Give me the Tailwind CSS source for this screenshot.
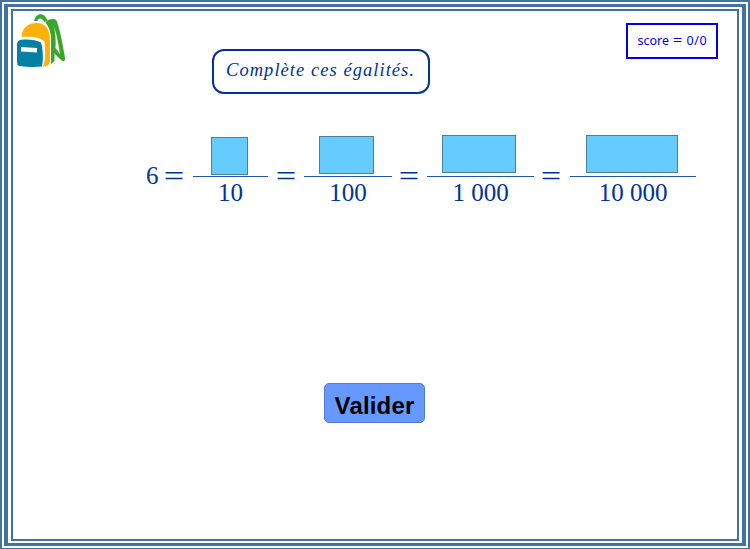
<!DOCTYPE html>
<html lang="fr">
<head>
<meta charset="utf-8">
<title>Égalités</title>
<script src="https://cdn.jsdelivr.net/npm/@tailwindcss/browser@4"></script>
</head>
<body class="bg-white">
<div class="w-[750px] h-[549px] overflow-hidden border-[#4272a0] border-x-2 border-t-2 border-b p-0.5">
<div class="w-full h-full border-[#4272a0] border-x-4 border-y-3 px-[3px] py-0.5">
<main class="relative w-full h-full border-2 border-[#4272a0] text-[#003399] font-['Liberation_Serif',serif]">
  <header class="flex items-start h-[110px]">
    <svg class="ml-[3px] mt-[2px] w-[50px] h-[56px] shrink-0" viewBox="16 13 50 56">
      <path d="M34 21C36 12 45 12 47.500 21L44 22C43 18 38 17 37.500 21Z" fill="#3aa62a"/>
      <path d="M45.500 22.500C48 19 54 18 56.500 20.500C60 29 63 46 65.200 59C65 61 63 62 61 60L54.500 53.500L54.500 61L51 64V40C51 32 49 27 45.500 22.500Z" fill="#3aa62a"/>
      <path d="M53.500 26C57 34 58.500 45 60 54L55.500 48C56 40 55.500 32 53.500 26Z" fill="white"/>
      <path d="M21.500 37C22 27 29 22.500 38 23C48 24 50 32 50 42V62C49 66 46 67 43 66.500C45.500 62 45.500 50 44.500 42C42 37 30 36 21.500 37Z" fill="#ffb10b"/>
      <path d="M20 40C28 39 36 40 41 42.500C43 49 43.500 60 42 66.500Q31 67.500 19 66Q17 65 17 62V44Q17.500 40.500 20 40Z" fill="#0380a3"/>
      <path d="M21 47L37 48V52.500L21 51.500Z" fill="white"/>
    </svg>
    <h1 class="ml-[146px] mt-[37.500px] w-[218px] h-[45px] shrink-0 border-2 border-[#003399] rounded-[12px] flex items-center">
      <span class="ml-[12px] whitespace-nowrap text-[18.500px] italic tracking-[1.05px]">Complète ces égalités.</span>
    </h1>
    <div class="ml-[196px] mt-[12px] w-[92px] h-[36px] shrink-0 border-2 border-[#0000ee] text-[#0000ee] flex items-center justify-center text-[12.500px] font-['Noto_Sans',sans-serif] whitespace-nowrap"><span>score <span class="inline-block mx-[2px] scale-x-135">=</span> 0<span class="mx-[0.5px]">/</span>0</span></div>
  </header>
  <section class="ml-[133px] flex text-[25px] leading-[28px]">
    <div class="w-[12px] mt-[41px]">6</div>
    <div class="w-[16px] ml-[8px] mt-[41px] text-center"><span class="inline-block scale-x-145 scale-y-120">=</span></div>
    <div class="w-[75px] ml-[11px] flex flex-col items-center pt-[16px]"><div class="w-[37px] h-[38px] border border-[#4c8095] bg-[#66ccff] -translate-x-px"></div><div class="w-full h-px bg-[#2454aa] mt-px"></div><div class="mt-[2px]">10</div></div>
    <div class="w-[16px] ml-[10px] mt-[41px] text-center"><span class="inline-block scale-x-145 scale-y-120">=</span></div>
    <div class="w-[88px] ml-[10px] flex flex-col items-center pt-[15px]"><div class="w-[55px] h-[38px] border border-[#4c8095] bg-[#66ccff] -translate-x-[2px]"></div><div class="w-full h-px bg-[#2454aa] mt-[2px]"></div><div class="mt-[2px]">100</div></div>
    <div class="w-[16px] ml-[9px] mt-[41px] text-center"><span class="inline-block scale-x-145 scale-y-120">=</span></div>
    <div class="w-[107px] ml-[10px] flex flex-col items-center pt-[14px]"><div class="w-[74px] h-[38px] border border-[#4c8095] bg-[#66ccff] -translate-x-[2px]"></div><div class="w-full h-px bg-[#2454aa] mt-[3px]"></div><div class="mt-[2px]">1 000</div></div>
    <div class="w-[16px] ml-[9px] mt-[41px] text-center"><span class="inline-block scale-x-145 scale-y-120">=</span></div>
    <div class="w-[126px] ml-[11px] flex flex-col items-center pt-[14px]"><div class="w-[92px] h-[38px] border border-[#4c8095] bg-[#66ccff] -translate-x-px"></div><div class="w-full h-px bg-[#2454aa] mt-[3px]"></div><div class="mt-[2px]">10 000</div></div>
  </section>
  <button class="block ml-[311px] mt-[176px] w-[101px] h-[40px] rounded-[5px] border border-[#507bd0] bg-[#6699ff] text-black font-bold text-[24px] leading-none pt-[6px] tracking-[0.15px] font-['Liberation_Sans',sans-serif]">Valider</button>
</main>
</div>
</div>
</body>
</html>
